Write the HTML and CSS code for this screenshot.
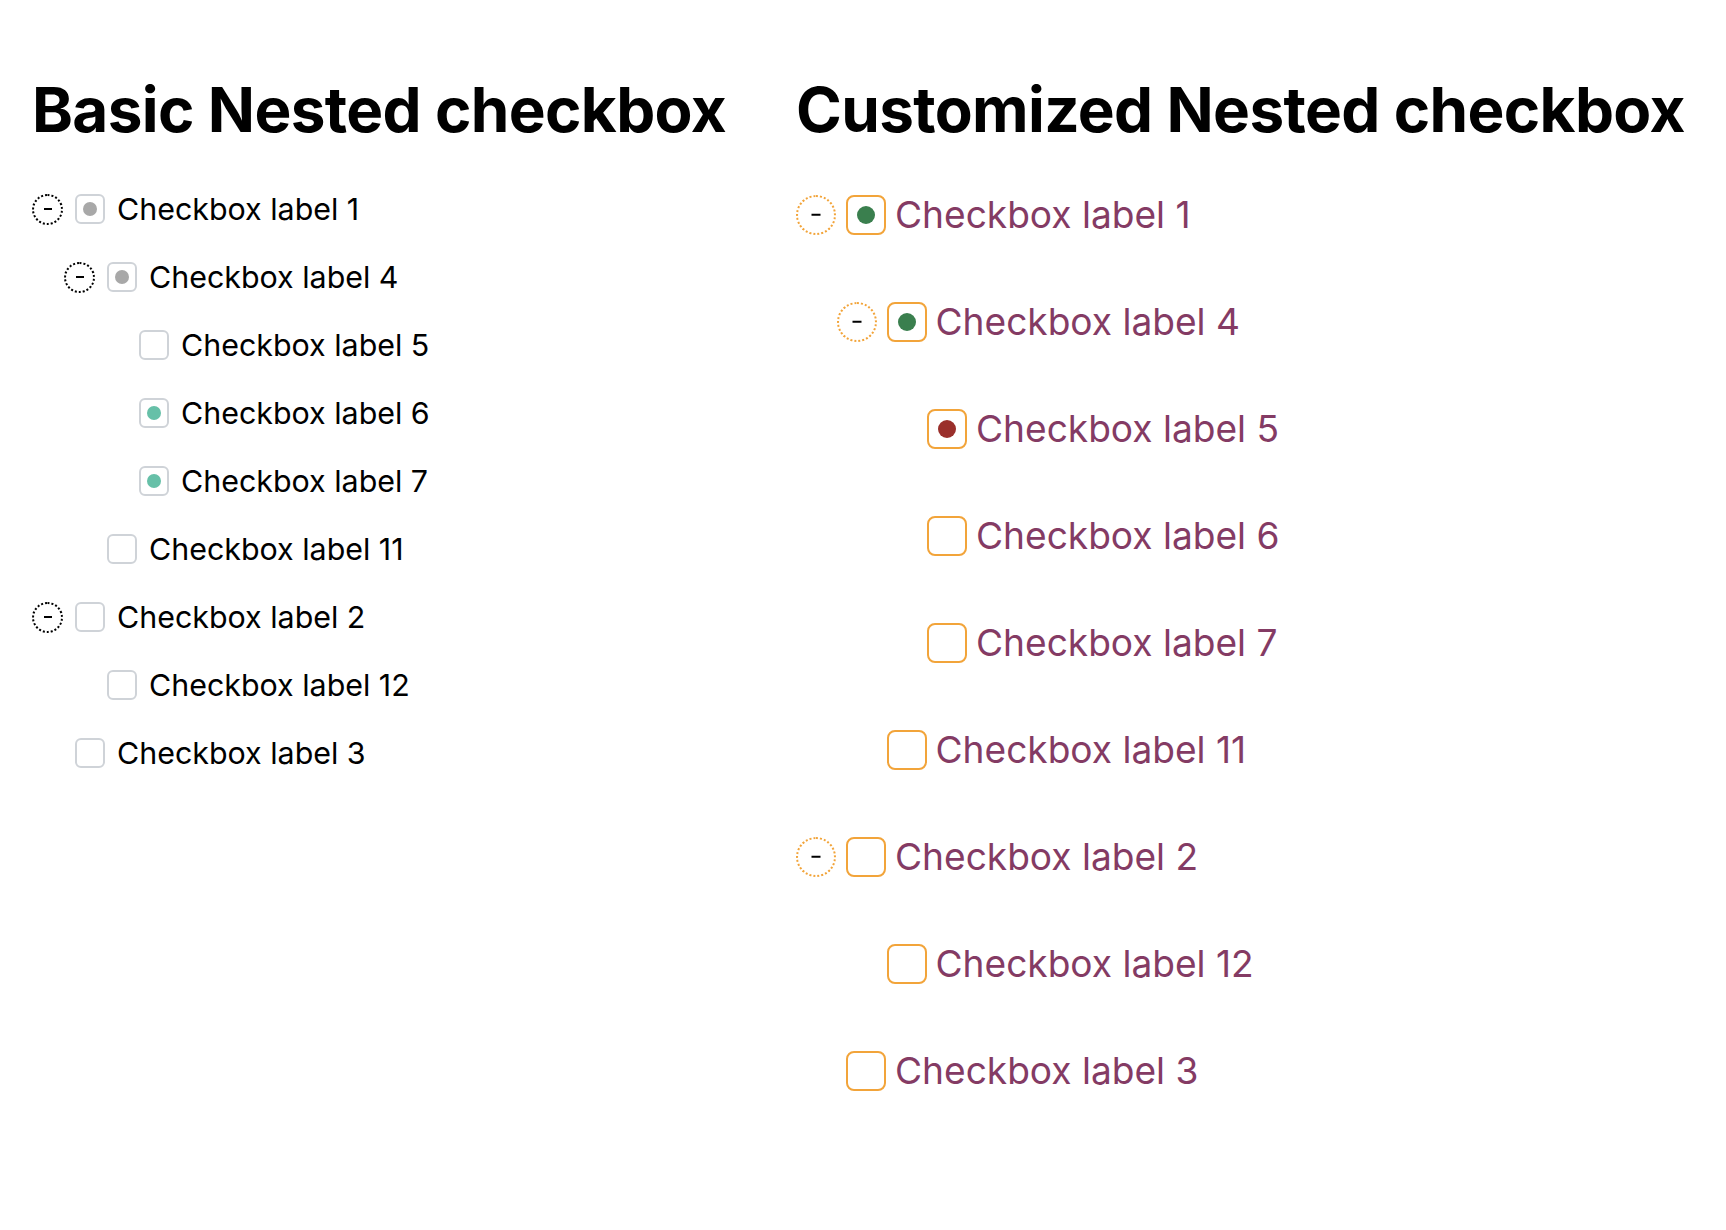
FILE: index.html
```html
<!DOCTYPE html>
<html>
<head>
<meta charset="utf-8">
<link rel="stylesheet" href="styles.css">
</head>
<body>
<main class="page">
  <section class="demo basic">
    <h1 class="title">Basic Nested checkbox</h1>
    <ul class="tree">
      <li>
        <div class="row"><span class="slot"><span class="toggle"></span></span><span class="box"><span class="dot grey"></span></span><span class="label">Checkbox label 1</span></div>
        <ul class="tree sub">
          <li>
            <div class="row"><span class="slot"><span class="toggle"></span></span><span class="box"><span class="dot grey"></span></span><span class="label">Checkbox label 4</span></div>
            <ul class="tree sub">
              <li><div class="row"><span class="slot"></span><span class="box"></span><span class="label">Checkbox label 5</span></div></li>
              <li><div class="row"><span class="slot"></span><span class="box"><span class="dot mint"></span></span><span class="label">Checkbox label 6</span></div></li>
              <li><div class="row"><span class="slot"></span><span class="box"><span class="dot mint"></span></span><span class="label">Checkbox label 7</span></div></li>
            </ul>
          </li>
          <li><div class="row"><span class="slot"></span><span class="box"></span><span class="label">Checkbox label 11</span></div></li>
        </ul>
      </li>
      <li>
        <div class="row"><span class="slot"><span class="toggle"></span></span><span class="box"></span><span class="label">Checkbox label 2</span></div>
        <ul class="tree sub">
          <li><div class="row"><span class="slot"></span><span class="box"></span><span class="label">Checkbox label 12</span></div></li>
        </ul>
      </li>
      <li><div class="row"><span class="slot"></span><span class="box"></span><span class="label">Checkbox label 3</span></div></li>
    </ul>
  </section>

  <section class="demo custom">
    <h1 class="title">Customized Nested checkbox</h1>
    <ul class="tree">
      <li>
        <div class="row"><span class="slot"><span class="toggle"></span></span><span class="box"><span class="dot green"></span></span><span class="label">Checkbox label 1</span></div>
        <ul class="tree sub">
          <li>
            <div class="row"><span class="slot"><span class="toggle"></span></span><span class="box"><span class="dot green"></span></span><span class="label">Checkbox label 4</span></div>
            <ul class="tree sub">
              <li><div class="row"><span class="slot"></span><span class="box"><span class="dot red"></span></span><span class="label">Checkbox label 5</span></div></li>
              <li><div class="row"><span class="slot"></span><span class="box"></span><span class="label">Checkbox label 6</span></div></li>
              <li><div class="row"><span class="slot"></span><span class="box"></span><span class="label">Checkbox label 7</span></div></li>
            </ul>
          </li>
          <li><div class="row"><span class="slot"></span><span class="box"></span><span class="label">Checkbox label 11</span></div></li>
        </ul>
      </li>
      <li>
        <div class="row"><span class="slot"><span class="toggle"></span></span><span class="box"></span><span class="label">Checkbox label 2</span></div>
        <ul class="tree sub">
          <li><div class="row"><span class="slot"></span><span class="box"></span><span class="label">Checkbox label 12</span></div></li>
        </ul>
      </li>
      <li><div class="row"><span class="slot"></span><span class="box"></span><span class="label">Checkbox label 3</span></div></li>
    </ul>
  </section>
</main>
</body>
</html>
```

FILE: styles.css
```css
html, body {
  margin: 0;
  padding: 0;
  background: #ffffff;
}

body {
  font-family: Inter, "Noto Sans", sans-serif;
  color: #000000;
}

.page {
  display: flex;
  align-items: flex-start;
  padding: 73px 0 0 32px;
}

.demo.basic {
  flex: 0 0 764px;
}

.demo.custom {
  flex: 1 1 auto;
}

.title {
  margin: 0;
  font-size: 62px;
  line-height: 74px;
  font-weight: 700;
  letter-spacing: -0.65px;
  white-space: nowrap;
}

.tree {
  list-style: none;
  margin: 0;
  padding: 0;
}

.row {
  display: flex;
  align-items: center;
}

.slot {
  display: flex;
  align-items: center;
  flex: 0 0 auto;
}

.toggle {
  position: relative;
  box-sizing: border-box;
  border-style: dotted;
  border-radius: 50%;
}

.toggle::after {
  content: "";
  position: absolute;
  left: 50%;
  top: 50%;
  transform: translate(-50%, -50%);
  background: #000;
}

.box {
  box-sizing: border-box;
  display: flex;
  align-items: center;
  justify-content: center;
  flex: 0 0 auto;
  border-style: solid;
}

.dot {
  border-radius: 50%;
}

/* basic */
.basic .tree.sub { padding-left: 32px; }
.basic .tree:not(.sub) { margin-top: 28px; }
.basic .row { height: 68px; }
.basic .slot { width: 43px; }
.basic .toggle {
  width: 31px;
  height: 31px;
  border-width: 2px;
  border-color: #000;
}
.basic .toggle::after { width: 8px; height: 2px; }
.basic .box {
  width: 30px;
  height: 30px;
  border-width: 2px;
  border-color: #cfd3d8;
  border-radius: 6px;
  margin-right: 12px;
}
.basic .dot { width: 14px; height: 14px; }
.basic .dot.grey { background: #a8a8a8; }
.basic .dot.mint { background: #66c0a8; }
.basic .label {
  font-size: 30.4px;
  color: #000;
}

/* customized */
.custom .tree.sub { padding-left: 40.5px; }
.custom .tree:not(.sub) { margin-top: 14px; }
.custom .row { height: 107px; }
.custom .slot { width: 50px; }
.custom .toggle {
  width: 40px;
  height: 40px;
  border-width: 2px;
  border-color: #f2a43a;
}
.custom .toggle::after { width: 9px; height: 2.5px; }
.custom .box {
  width: 40px;
  height: 40px;
  border-width: 2px;
  border-color: #f2a43a;
  border-radius: 8px;
  margin-right: 9px;
}
.custom .dot { width: 18px; height: 18px; }
.custom .dot.green { background: #3a7f4e; }
.custom .dot.red { background: #9a2f2b; }
.custom .label {
  font-size: 37.1px;
  color: #843b64;
}
```
